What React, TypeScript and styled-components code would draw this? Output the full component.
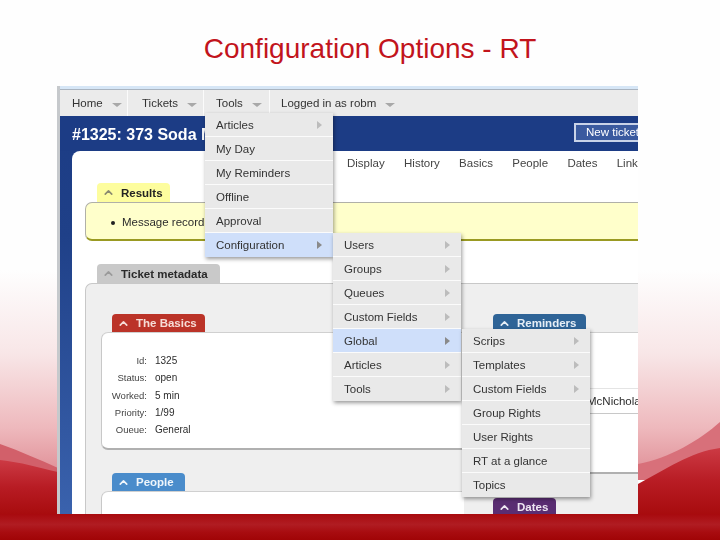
import React from "react";
import styled, { createGlobalStyle } from "styled-components";
import { ChevronUp } from "lucide-react";

const Global = createGlobalStyle`
  html, body { margin: 0; padding: 0; background: #fff; }
  * { box-sizing: border-box; }
`;

const Slide = styled.div`
  position: relative;
  width: 720px;
  height: 540px;
  overflow: hidden;
  background: #fefefe;
  font-family: "Liberation Sans", Arial, sans-serif;
`;
const Backdrop = styled.svg`
  position: absolute;
  inset: 0;
`;
const Title = styled.h1`
  position: relative;
  margin: 0;
  height: 86px;
  padding: 33px 0 0 20px;
  text-align: center;
  font-size: 28px;
  line-height: 31px;
  font-weight: 400;
  color: #c2141c;
`;
const Screenshot = styled.div`
  position: relative;
  margin-left: 57px;
  width: 581px;
  height: 428px;
  overflow: hidden;
  background: #fff;
  border-left: 3px solid #c6c9cc;
  filter: blur(0.4px);
  color: #2c2c2c;
`;
const TopStrip = styled.div`
  height: 4px;
  background: #d6e6f6;
  border-bottom: 1px solid #aab4c0;
`;
const Nav = styled.nav`
  display: flex;
  height: 26px;
  background: #ebebeb;
`;
const NavItem = styled.div<{ $width: number; $pad: number }>`
  position: relative;
  display: flex;
  align-items: center;
  gap: 9px;
  width: ${(p) => p.$width}px;
  padding-left: ${(p) => p.$pad}px;
  font-size: 11.5px;
  color: #333;
  border-right: 1px solid #fbfbfb;
  &:last-child { border-right: 0; width: auto; }
`;
const NavArrow = styled.span`
  margin-top: 3px;
  border-left: 5px solid transparent;
  border-right: 5px solid transparent;
  border-top: 4px solid #a8a8a8;
`;
const Body = styled.div`
  height: 398px;
  background: linear-gradient(#1c3c85 0%, #1f4088 30%, #3a62ad 100%);
`;
const Header = styled.header`
  display: flex;
  align-items: center;
  justify-content: space-between;
  height: 35px;
  padding: 2px 0 0 12px;
  background: #1c3c85;
`;
const TicketName = styled.div`
  font-size: 16px;
  font-weight: 700;
  color: #fff;
  white-space: nowrap;
`;
const NewTicket = styled.div`
  display: flex;
  align-items: center;
  width: 64px;
  height: 19px;
  margin-top: -5px;
  padding-left: 10px;
  font-size: 11.5px;
  white-space: nowrap;
  overflow: hidden;
  color: #fff;
  background: #3a5a9f;
  border: 2px solid #c9d3e8;
  border-right: 0;
`;
const Content = styled.main`
  height: 363px;
  margin-left: 12px;
  background: #fff;
  border-top-left-radius: 8px;
  overflow: hidden;
`;
const PageTabs = styled.div`
  display: flex;
  gap: 19.3px;
  height: 32px;
  padding: 6px 0 0 275px;
  font-size: 11.5px;
  line-height: 13px;
  color: #444;
  white-space: nowrap;
`;
const SectionTab = styled.div<{ $bg: string; $fg: string; $ml: number; $w: number; $h?: number }>`
  display: flex;
  align-items: center;
  gap: 6px;
  width: ${(p) => p.$w}px;
  height: ${(p) => p.$h ?? 18}px;
  margin-left: ${(p) => p.$ml}px;
  padding-left: 5px;
  font-size: 11.5px;
  font-weight: 700;
  white-space: nowrap;
  color: ${(p) => p.$fg};
  background: ${(p) => p.$bg};
  border-radius: 4px 4px 0 0;
`;
const ResultsBox = styled.div`
  height: 39px;
  margin: 0 0 23px 13px;
  padding: 13px 0 0 27px;
  background: #ffffcb;
  border-top: 1px solid #b0b0a8;
  border-left: 1px solid #b0b0a8;
  border-bottom: 2px solid #9a9a22;
  border-top-left-radius: 7px;
  border-bottom-left-radius: 7px;
  font-size: 11.5px;
  position: relative;
  white-space: nowrap;
  &::before {
    content: "";
    position: absolute;
    left: 25px;
    top: 18px;
    width: 4px;
    height: 4px;
    border-radius: 50%;
    background: #222;
  }
  & > span { padding-left: 9px; }
`;
const Metadata = styled.div`
  display: grid;
  grid-template-columns: 363px 1fr;
  height: 240px;
  margin-left: 13px;
  padding: 30px 0 0 15px;
  background: #efefef;
  border-top: 1px solid #c8c8c8;
  border-left: 1px solid #c8c8c8;
  border-top-left-radius: 7px;
`;
const Column = styled.div`
  display: flex;
  flex-direction: column;
`;
const Box = styled.div<{ $h: number; $gap?: number }>`
  height: ${(p) => p.$h}px;
  flex: none;
  margin-bottom: ${(p) => p.$gap ?? 24}px;
  background: #fff;
  border-top: 1px solid #d0d0d0;
  border-left: 1px solid #c8c8c8;
  border-bottom: 2px solid #b0b0b0;
  border-radius: 7px 0 0 7px;
  overflow: hidden;
`;
const OpenBox = styled(Box)`
  border-bottom: 0;
  border-radius: 7px 0 0 0;
`;
const FieldList = styled.div`
  display: grid;
  grid-template-columns: 45px 1fr;
  column-gap: 8px;
  grid-auto-rows: 17.3px;
  align-items: center;
  height: 100px;
  overflow: hidden;
  padding-top: 19px;
  font-size: 10px;
`;
const FieldLabel = styled.div`
  text-align: right;
  font-size: 9.5px;
  color: #444;
`;
const RemindersBody = styled.div`
  height: 88px;
`;
const ReminderRow = styled.div`
  height: 26px;
  padding: 6px 0 0 122px;
  font-size: 11.5px;
  white-space: nowrap;
  border-top: 1px solid #e4e4e4;
  border-bottom: 1px solid #c8c8c8;
  margin-top: 55px;
`;
const Menu = styled.ul<{ $top: number; $left: number }>`
  position: absolute;
  z-index: 5;
  top: ${(p) => p.$top}px;
  left: ${(p) => p.$left}px;
  width: 128px;
  margin: 0;
  padding: 0;
  list-style: none;
  box-shadow: 1px 2px 4px rgba(0, 0, 0, 0.4);
`;
const MenuItem = styled.li<{ $active?: boolean }>`
  position: relative;
  display: flex;
  align-items: center;
  justify-content: space-between;
  height: 24px;
  padding: 0 11px;
  font-size: 11.5px;
  color: #333;
  white-space: nowrap;
  background: ${(p) => (p.$active ? "#cfdffa" : "#e9e9e9")};
  border-bottom: 1px solid #fbfbfb;
  &:last-child { border-bottom: 0; }
`;
const MenuArrow = styled.span<{ $dark?: boolean }>`
  border-top: 4px solid transparent;
  border-bottom: 4px solid transparent;
  border-left: 5px solid ${(p) => (p.$dark ? "#8a8a8a" : "#bcbcbc")};
`;

const Chevron = ({ color }: { color: string }) => (
  <ChevronUp size={13} strokeWidth={3} color={color} />
);

type Entry = { label: string; arrow?: boolean };

const tools: Entry[] = [
  { label: "Articles", arrow: true },
  { label: "My Day" },
  { label: "My Reminders" },
  { label: "Offline" },
  { label: "Approval" },
];
const config: Entry[] = [
  { label: "Users", arrow: true },
  { label: "Groups", arrow: true },
  { label: "Queues", arrow: true },
  { label: "Custom Fields", arrow: true },
];
const configAfter: Entry[] = [
  { label: "Articles", arrow: true },
  { label: "Tools", arrow: true },
];
const globalItems: Entry[] = [
  { label: "Scrips", arrow: true },
  { label: "Templates", arrow: true },
  { label: "Custom Fields", arrow: true },
  { label: "Group Rights" },
  { label: "User Rights" },
  { label: "RT at a glance" },
  { label: "Topics" },
];
const fields = [
  ["Id:", "1325"],
  ["Status:", "open"],
  ["Worked:", "5 min"],
  ["Priority:", "1/99"],
  ["Queue:", "General"],
];

const items = (list: Entry[]) =>
  list.map((e) => (
    <MenuItem key={e.label}>
      {e.label}
      {e.arrow && <MenuArrow />}
    </MenuItem>
  ));

export default function App() {
  return (
    <Slide>
      <Global />
      <Backdrop width="720" height="540" viewBox="0 0 720 540">
        <defs>
          <linearGradient id="fade" x1="0" y1="0" x2="0" y2="1">
            <stop offset="0" stopColor="#fefefe" />
            <stop offset="0.4" stopColor="#f8e6e7" />
            <stop offset="0.75" stopColor="#eeb9bd" />
            <stop offset="1" stopColor="#de8a92" />
          </linearGradient>
          <linearGradient id="red" x1="0" y1="0" x2="0" y2="1">
            <stop offset="0" stopColor="#cc3a44" />
            <stop offset="0.5" stopColor="#b81c24" />
            <stop offset="1" stopColor="#a80c0e" />
          </linearGradient>
          <linearGradient id="band" x1="0" y1="0" x2="0" y2="1">
            <stop offset="0" stopColor="#a80a0e" />
            <stop offset="0.4" stopColor="#b01c22" />
            <stop offset="0.7" stopColor="#a80c10" />
            <stop offset="1" stopColor="#a00406" />
          </linearGradient>
        </defs>
        <rect x="0" y="270" width="58" height="210" fill="url(#fade)" />
        <rect x="638" y="270" width="82" height="210" fill="url(#fade)" />
        <path d="M0 444C20 451 40 460 58 468V480H0Z" fill="#d2606a" />
        <path d="M0 460C20 462 40 468 58 472V514H0Z" fill="url(#red)" />
        <path d="M638 464C670 458 700 440 720 422V480H638Z" fill="#d8707a" />
        <path d="M638 484C665 470 690 452 720 448V514H638Z" fill="url(#red)" />
        <rect x="0" y="514" width="720" height="26" fill="url(#band)" />
      </Backdrop>
      <Title>Configuration Options - RT</Title>
      <Screenshot>
        <TopStrip />
        <Nav>
          <NavItem $width={68} $pad={12}>
            Home <NavArrow />
          </NavItem>
          <NavItem $width={76} $pad={14}>
            Tickets <NavArrow />
          </NavItem>
          <NavItem $width={66} $pad={12}>
            Tools <NavArrow />
            <Menu $top={23} $left={1}>
              {items(tools)}
              <MenuItem $active>
                Configuration
                <MenuArrow $dark />
                <Menu $top={0} $left={128}>
                  {items(config)}
                  <MenuItem $active>
                    Global
                    <MenuArrow $dark />
                    <Menu $top={0} $left={129}>
                      {items(globalItems)}
                    </Menu>
                  </MenuItem>
                  {items(configAfter)}
                </Menu>
              </MenuItem>
            </Menu>
          </NavItem>
          <NavItem $width={140} $pad={11}>
            Logged in as robm <NavArrow />
          </NavItem>
        </Nav>
        <Body>
          <Header>
            <TicketName>#1325: 373 Soda Machine</TicketName>
            <NewTicket>New ticket</NewTicket>
          </Header>
          <Content>
            <PageTabs>
              <span>Display</span>
              <span>History</span>
              <span>Basics</span>
              <span>People</span>
              <span>Dates</span>
              <span>Links</span>
            </PageTabs>
            <SectionTab $bg="#fdfd9e" $fg="#222" $ml={25} $w={73} $h={19}>
              <Chevron color="#8a8a70" />
              Results
            </SectionTab>
            <ResultsBox>
              <span>Message recorded</span>
            </ResultsBox>
            <SectionTab $bg="#c9c9c9" $fg="#2a2a2a" $ml={25} $w={123} $h={19}>
              <Chevron color="#9a9a9a" />
              Ticket metadata
            </SectionTab>
            <Metadata>
              <Column>
                <SectionTab $bg="#bb3328" $fg="#f6dcd6" $ml={11} $w={93}>
                  <Chevron color="#f6dcd6" />
                  The Basics
                </SectionTab>
                <Box $h={118} $gap={23}>
                  <FieldList>
                    {fields.map(([k, v]) => (
                      <React.Fragment key={k}>
                        <FieldLabel>{k}</FieldLabel>
                        <div>{v}</div>
                      </React.Fragment>
                    ))}
                  </FieldList>
                </Box>
                <SectionTab $bg="#4a8ccb" $fg="#eef5fb" $ml={11} $w={73}>
                  <Chevron color="#eef5fb" />
                  People
                </SectionTab>
                <OpenBox $h={60} />
              </Column>
              <Column>
                <SectionTab $bg="#2f6497" $fg="#e6eef6" $ml={29} $w={93}>
                  <Chevron color="#e6eef6" />
                  Reminders
                </SectionTab>
                <Box $h={142}>
                  <RemindersBody>
                    <ReminderRow>McNichola</ReminderRow>
                  </RemindersBody>
                </Box>
                <SectionTab $bg="#5a2d72" $fg="#eee6f2" $ml={29} $w={63}>
                  <Chevron color="#eee6f2" />
                  Dates
                </SectionTab>
              </Column>
            </Metadata>
          </Content>
        </Body>
      </Screenshot>
    </Slide>
  );
}
